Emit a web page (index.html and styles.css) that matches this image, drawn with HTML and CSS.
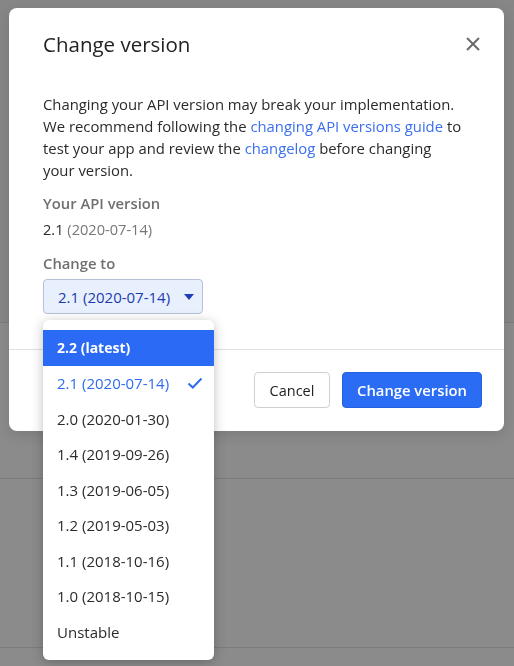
FILE: index.html
```html
<!DOCTYPE html>
<html>
<head>
<meta charset="utf-8">
<link rel="stylesheet" href="styles.css">
</head>
<body>
<div class="page">
  <div class="page-head"></div>
  <div class="page-row"></div>
  <div class="page-row"></div>
  <div class="page-rest"></div>
</div>
<div class="overlay">
  <div class="modal">
    <div class="modal-header">
      <h2 class="modal-title">Change version</h2>
      <button class="close" aria-label="Close">
        <svg width="14" height="14" viewBox="0 0 14 14"><path d="M1 1 L13 13 M13 1 L1 13" stroke="#6b6b6b" stroke-width="2" fill="none"/></svg>
      </button>
    </div>
    <div class="modal-body">
      <p class="intro">Changing your API version may break your implementation. We recommend following the <a href="#">changing API versions guide</a> to test your app and review the <a href="#">changelog</a> before changing your version.</p>
      <div class="field">
        <div class="label">Your API version</div>
        <div class="value">2.1 <span class="muted">(2020-07-14)</span></div>
      </div>
      <div class="field">
        <div class="label">Change to</div>
        <div class="select-wrap">
          <button class="select">2.1 (2020-07-14)
            <svg class="caret" width="10" height="6" viewBox="0 0 10 6"><path d="M0 0 H10 L5 6 Z" fill="#1f3fb8"/></svg>
          </button>
          <ul class="menu">
            <li class="item active">2.2 (latest)</li>
            <li class="item selected">2.1 (2020-07-14)
              <svg class="check" width="16" height="12" viewBox="0 0 16 12"><path d="M1.5 6.5 L5.8 10.5 L14.5 1.5" stroke="#2f6cf0" stroke-width="2" fill="none"/></svg>
            </li>
            <li class="item">2.0 (2020-01-30)</li>
            <li class="item">1.4 (2019-09-26)</li>
            <li class="item">1.3 (2019-06-05)</li>
            <li class="item">1.2 (2019-05-03)</li>
            <li class="item">1.1 (2018-10-16)</li>
            <li class="item">1.0 (2018-10-15)</li>
            <li class="item">Unstable</li>
          </ul>
        </div>
      </div>
    </div>
    <div class="modal-footer">
      <button class="btn btn-secondary">Cancel</button>
      <button class="btn btn-primary">Change version</button>
    </div>
  </div>
</div>
</body>
</html>
```
FILE: styles.css
```css
* { box-sizing: border-box; }
html, body { margin: 0; padding: 0; }
body {
  width: 514px;
  height: 666px;
  overflow: hidden;
  background: #8b8b8b;
  font-family: "Open Sans", "Noto Sans", sans-serif;
  color: #2b2b2b;
}
.page { display: flex; flex-direction: column; }
.page-head { height: 323px; background: #868686; border-bottom: 1px solid #7c7c7c; }
.page-row { height: 156px; border-bottom: 1px solid #7c7c7c; }
.page-row + .page-row { height: 169px; }
.page-rest { flex: 1; }

.overlay {
  position: fixed;
  inset: 0;
  padding: 8px 10px 0 9px;
}
.modal {
  width: 495px;
  background: #fff;
  border-radius: 8px;
  box-shadow: 0 4px 14px rgba(0,0,0,0.12);
}
.modal-header {
  display: flex;
  justify-content: space-between;
  align-items: center;
  padding: 22px 24px 0 34px;
}
.modal-title {
  margin: 0;
  font-size: 20.5px;
  font-weight: 400;
  line-height: 28px;
  color: #222;
}
.close {
  border: 0;
  background: none;
  padding: 0;
  width: 14px;
  height: 14px;
  display: flex;
}
.modal-body {
  padding: 35px 30px 35px 34px;
}
.intro {
  margin: 0;
  max-width: 420px;
  font-size: 14.85px;
  line-height: 22px;
  color: #2b2b2b;
}
.intro a { color: #3b6ff0; text-decoration: none; }
.field { margin-top: 11px; }
.label {
  font-size: 14.8px;
  font-weight: 600;
  color: #6f6f6f;
  line-height: 22px;
}
.value {
  margin-top: 5px;
  font-size: 14.6px;
  line-height: 20px;
  color: #2b2b2b;
}
.muted { color: #777; }
.field + .field { margin-top: 13px; }
.select-wrap { position: relative; margin-top: 5px; width: 160px; }
.select {
  display: flex;
  align-items: center;
  gap: 14px;
  height: 35px;
  padding: 0 0 0 14px;
  width: 160px;
  border: 1px solid #b6c0d6;
  border-radius: 4px;
  background: #e9f0fd;
  color: #1c3bb0;
  font-family: inherit;
  font-size: 15px;
  font-weight: 500;
  white-space: nowrap;
}
.menu {
  position: absolute;
  top: 41px;
  left: 0;
  width: 171px;
  margin: 0;
  padding: 10px 0;
  list-style: none;
  background: #fff;
  border-radius: 6px;
  box-shadow: 0 2px 12px rgba(0,0,0,0.25);
  z-index: 2;
}
.item {
  display: flex;
  align-items: center;
  justify-content: space-between;
  height: 35.5px;
  padding: 0 11px 0 14px;
  font-size: 15px;
  color: #2b2b2b;
  white-space: nowrap;
}
.item.active { background: #2b6af5; color: #fff; font-weight: 700; font-size: 14px; }
.item.selected { color: #2f6cf0; }
.modal-footer {
  display: flex;
  justify-content: flex-end;
  gap: 12px;
  padding: 22px 22px 23px;
  border-top: 1px solid #e2e2e2;
}
.btn {
  height: 36px;
  border-radius: 4px;
  font-family: inherit;
  font-size: 14.5px;
  padding: 0;
}
.btn-secondary {
  background: #fff;
  border: 1px solid #cfcfcf;
  color: #222;
  width: 76px;
}
.btn-primary {
  background: #2b6cf5;
  border: 1px solid #2560e0;
  color: #fff;
  font-weight: 600;
  font-size: 14.8px;
  width: 140px;
}
```
